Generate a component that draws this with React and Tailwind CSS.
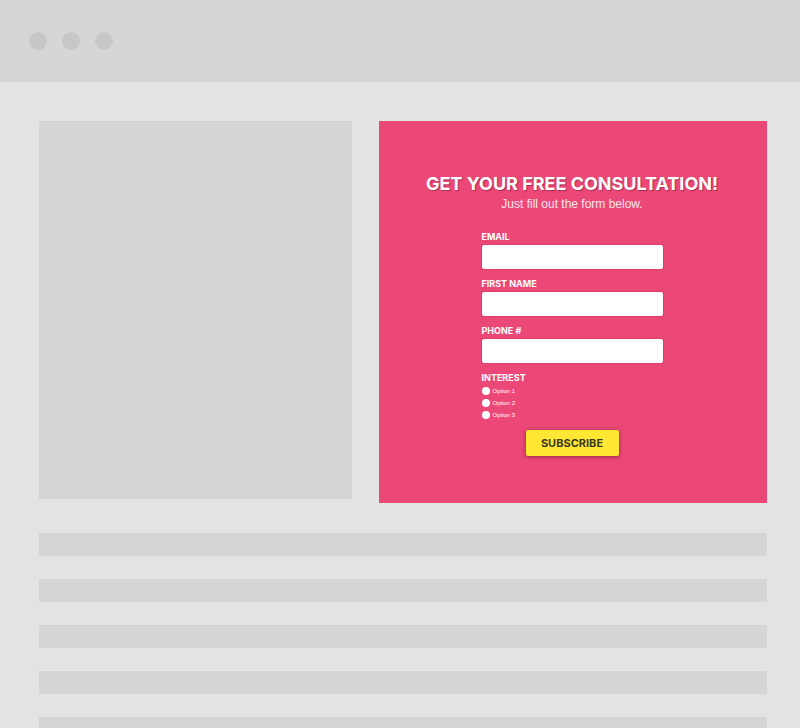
const fields = [
  { id: "email", label: "EMAIL", type: "email" },
  { id: "first-name", label: "FIRST NAME", type: "text" },
  { id: "phone", label: "PHONE #", type: "tel" },
]

const options = ["Option 1", "Option 2", "Option 3"]

const Field = ({ id, label, type }) => {
  return (
    <div className="flex flex-col mb-[7px]">
      <label htmlFor={id} className="text-[9px] leading-4 font-bold">{label}</label>
      <input
        id={id}
        name={id}
        type={type}
        className="h-6 w-full px-2 bg-white rounded-xs text-xs text-gray-800 shadow-[0_0_1px_1px_rgba(170,40,85,0.3)] outline-none"
      />
    </div>
  )
}

const ConsultationForm = () => {
  return (
    <section className="h-[382px] pl-4 pr-[18px] pt-[51px] bg-[#ec4877] text-white font-['Inter',sans-serif]">
      <h1 className="text-center text-lg leading-6 font-bold whitespace-nowrap [text-shadow:1px_1px_1px_rgba(100,20,50,0.5)]">
        GET YOUR FREE CONSULTATION!
      </h1>
      <p className="text-center text-xs leading-4 font-['Liberation_Sans',sans-serif] text-[#fde4ec]">
        Just fill out the form below.
      </p>
      <form className="mx-auto mt-[17px] w-[181px]" onSubmit={(e) => e.preventDefault()}>
        {fields.map((field) => <Field key={field.id} {...field} />)}
        <fieldset>
          <legend className="text-[9px] leading-[15px] font-bold">INTEREST</legend>
          {options.map((option) => (
            <label key={option} className="flex items-center gap-[3px] h-3 text-[6px] leading-3 font-['Liberation_Sans',sans-serif]">
              <input
                type="radio"
                name="interest"
                value={option}
                className="appearance-none size-2 rounded-full bg-white checked:border-2 checked:border-gray-500"
              />
              {option}
            </label>
          ))}
        </fieldset>
        <button
          type="submit"
          className="block mx-auto mt-[9px] h-[26px] w-[93px] rounded-xs bg-[#ffe733] text-[#3d3a1c] text-[11px] leading-4 font-bold shadow-[0_1px_4px_rgba(90,20,45,0.6)] cursor-pointer"
        >
          SUBSCRIBE
        </button>
      </form>
    </section>
  )
}

const App = () => {
  return (
    <div className="h-screen overflow-hidden bg-[#e3e3e3]">
      <header className="flex items-center gap-[15px] h-[82px] px-[29px] bg-[#d6d6d6]">
        <span className="size-[18px] rounded-full bg-[#c7c7c7]" />
        <span className="size-[18px] rounded-full bg-[#c7c7c7]" />
        <span className="size-[18px] rounded-full bg-[#c7c7c7]" />
      </header>
      <main className="pl-[39px] pr-[33px] pt-[39px]">
        <div className="grid grid-cols-[313fr_388fr] items-start gap-[27px]">
          <div className="h-[378px] bg-[#d5d5d5]" />
          <ConsultationForm />
        </div>
        <div className="flex flex-col gap-[23px] mt-[30px]">
          {[1, 2, 3, 4, 5].map((row) => (
            <div key={row} className="h-[23px] shrink-0 bg-[#d5d5d5]" />
          ))}
        </div>
      </main>
    </div>
  )
}

export default App
